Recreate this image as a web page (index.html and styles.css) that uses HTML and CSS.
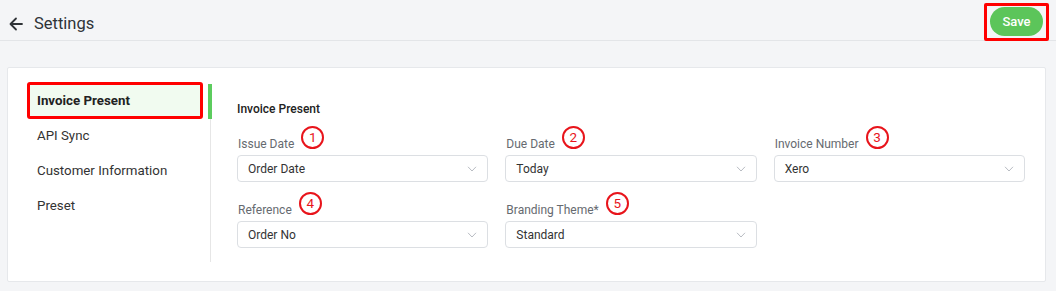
FILE: index.html
```html
<!DOCTYPE html>
<html lang="en">
<head>
<meta charset="utf-8">
<title>Settings</title>
<link rel="stylesheet" href="styles.css">
</head>
<body>
<header class="topbar">
  <button class="back" aria-label="Back">
    <svg width="14" height="14" viewBox="0 0 14 14"><path d="M13 7H1.8M7 1.5L1.5 7L7 12.5" fill="none" stroke="#2f3337" stroke-width="1.8" stroke-linecap="round" stroke-linejoin="round"/></svg>
  </button>
  <h1 class="title">Settings</h1>
  <div class="spacer"></div>
  <div class="mark-box"><button class="save">Save</button></div>
</header>
<main class="card">
  <nav class="sidenav">
    <a class="nav-item active">Invoice Present</a>
    <a class="nav-item">API Sync</a>
    <a class="nav-item">Customer Information</a>
    <a class="nav-item">Preset</a>
  </nav>
  <div class="divider"><div class="divider-active"></div></div>
  <section class="content">
    <h2 class="section-title">Invoice Present</h2>
    <div class="grid">
      <div class="field">
        <div class="label-row"><span class="label">Issue Date</span><span class="badge">1</span></div>
        <div class="select"><span>Order Date</span><svg class="chev" width="10" height="6" viewBox="0 0 10 6"><polyline points="1,0.8 5,5 9,0.8" fill="none" stroke="#b8bcc2" stroke-width="1"/></svg></div>
      </div>
      <div class="field">
        <div class="label-row"><span class="label">Due Date</span><span class="badge">2</span></div>
        <div class="select"><span>Today</span><svg class="chev" width="10" height="6" viewBox="0 0 10 6"><polyline points="1,0.8 5,5 9,0.8" fill="none" stroke="#b8bcc2" stroke-width="1"/></svg></div>
      </div>
      <div class="field">
        <div class="label-row"><span class="label">Invoice Number</span><span class="badge">3</span></div>
        <div class="select"><span>Xero</span><svg class="chev" width="10" height="6" viewBox="0 0 10 6"><polyline points="1,0.8 5,5 9,0.8" fill="none" stroke="#b8bcc2" stroke-width="1"/></svg></div>
      </div>
      <div class="field">
        <div class="label-row"><span class="label">Reference</span><span class="badge">4</span></div>
        <div class="select"><span>Order No</span><svg class="chev" width="10" height="6" viewBox="0 0 10 6"><polyline points="1,0.8 5,5 9,0.8" fill="none" stroke="#b8bcc2" stroke-width="1"/></svg></div>
      </div>
      <div class="field">
        <div class="label-row"><span class="label">Branding Theme*</span><span class="badge">5</span></div>
        <div class="select"><span>Standard</span><svg class="chev" width="10" height="6" viewBox="0 0 10 6"><polyline points="1,0.8 5,5 9,0.8" fill="none" stroke="#b8bcc2" stroke-width="1"/></svg></div>
      </div>
    </div>
  </section>
</main>
</body>
</html>
```
FILE: styles.css
```css
* { box-sizing: border-box; }
html, body { margin: 0; padding: 0; }
body {
  background: #f4f5f7;
  font-family: Roboto, "Liberation Sans", Arial, sans-serif;
  color: #333;
  width: 1056px;
  height: 291px;
  overflow: hidden;
}
.topbar {
  height: 41px;
  display: flex;
  align-items: center;
  padding: 0 7px 0 9px;
  border-bottom: 1px solid #e3e5e8;
}
.back {
  border: 0;
  background: none;
  padding: 0;
  width: 14px;
  height: 14px;
  display: flex;
  margin-top: 7px;
}
.title {
  margin: 7px 0 0 11px;
  font-size: 16.5px;
  font-weight: 400;
  color: #2f3337;
  line-height: 20px;
}
.spacer { flex: 1; }
.mark-box {
  align-self: flex-start;
  margin-top: 3px;
  border: 3px solid #f00;
  border-radius: 2px;
  padding: 1px 3px 2px 3px;
  margin-bottom: -3px;
}
.save {
  display: block;
  width: 53px;
  height: 29px;
  border: 0;
  border-radius: 15px;
  background: #5cc55a;
  color: #fff;
  font-family: Roboto, "Liberation Sans", Arial, sans-serif;
  font-size: 13px;
  font-weight: 500;
  padding: 0;
}
.card {
  margin: 26px 10px 0 7px;
  background: #fff;
  border: 1px solid #e6e8eb;
  border-radius: 2px;
  display: flex;
  align-items: flex-start;
  padding: 15px 20px 19px 20px;
}
.sidenav {
  width: 174px;
  display: flex;
  flex-direction: column;
}
.nav-item {
  height: 35px;
  display: flex;
  align-items: center;
  padding-left: 9px;
  font-size: 13.3px;
  color: #333;
}
.nav-item.active {
  font-weight: 700;
  color: #222;
  background: #f1fbf0;
  outline: 3px solid #f00;
  outline-offset: -2px;
  border-radius: 2px;
}
.divider {
  width: 4px;
  height: 178px;
  margin: 1px 0 0 6px;
  background: linear-gradient(#e6e6e6, #e6e6e6) center / 1px 100% no-repeat;
}
.divider-active {
  height: 35px;
  background: #5ccc5e;
}
.content {
  flex: 1;
  padding: 18px 0 0 25px;
}
.section-title {
  margin: 0;
  font-size: 12px;
  font-weight: 500;
  line-height: 16px;
  color: #222;
}
.grid {
  margin-top: 10px;
  display: grid;
  grid-template-columns: repeat(3, 1fr);
  column-gap: 17px;
  row-gap: 11px;
}
.label-row {
  display: flex;
  align-items: flex-end;
  gap: 7px;
  height: 25px;
}
.label {
  font-size: 12px;
  line-height: 16px;
  color: #666a70;
  padding-left: 1px;
}
.badge {
  width: 23px;
  height: 23px;
  border: 2px solid #e8141b;
  border-radius: 50%;
  color: #e8141b;
  font-size: 13.5px;
  line-height: 19px;
  text-align: center;
  margin-bottom: 3px;
}
.select {
  margin-top: 3px;
  height: 27px;
  border: 1px solid #dcdfe3;
  border-radius: 4px;
  display: flex;
  align-items: center;
  justify-content: space-between;
  padding: 0 10px 0 10px;
  font-size: 12px;
  color: #333;
}
.chev { margin-top: 1px; }
```
